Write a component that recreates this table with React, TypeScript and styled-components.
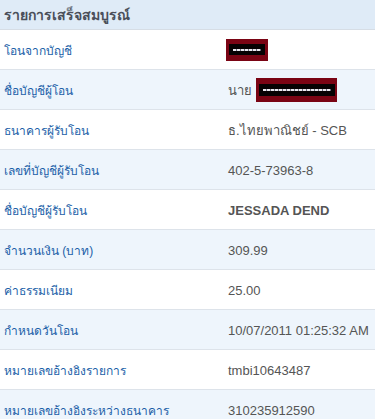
import React from "react";
import styled, { createGlobalStyle } from "styled-components";

const Global = createGlobalStyle`
  html, body { margin: 0; padding: 0; background: #ffffff; }
  body { font-family: "Liberation Sans", "Noto Sans", sans-serif; }
`;

const Panel = styled.div`
  width: 375px;
  display: flex;
  flex-direction: column;
`;

const Header = styled.div`
  height: 29px;
  background: #dfebf7;
  border-bottom: 1px solid #d6dde5;
  display: flex;
  align-items: center;
  padding-left: 4px;
  font-size: 14px;
  font-weight: bold;
  color: #4a4f5a;
`;

const Row = styled.div<{ $shaded: boolean }>`
  height: 40px;
  box-sizing: border-box;
  display: grid;
  grid-template-columns: 228px 1fr;
  align-items: center;
  background: ${(p) => (p.$shaded ? "#eef5fc" : "#ffffff")};
  border-bottom: 1px solid #dde3ea;
  padding-top: 2px;
  white-space: nowrap;
`;

const Label = styled.div`
  padding-left: 4px;
  color: #1c5fa8;
  font-size: 12px;
`;

const Value = styled.div<{ $bold?: boolean }>`
  color: #555555;
  font-size: 13px;
  font-weight: ${(p) => (p.$bold ? "bold" : "normal")};
  display: flex;
  align-items: center;
  gap: 4px;
`;

const Redact = styled.span<{ $w: number; $h: number }>`
  display: inline-flex;
  align-items: center;
  justify-content: center;
  width: ${(p) => p.$w}px;
  height: ${(p) => p.$h}px;
  background: #7a0414;
  margin-top: -2px;
`;

const RedactInner = styled.span<{ $w: number; $h: number }>`
  display: block;
  width: ${(p) => p.$w}px;
  height: ${(p) => p.$h}px;
  background: #050203;
  position: relative;
  &::after {
    content: "";
    position: absolute;
    left: 4px;
    right: 4px;
    top: 50%;
    height: 2px;
    margin-top: -1px;
    background: repeating-linear-gradient(90deg, #e8e8ee 0 3px, #6a6a7a 3px 4px);
  }
`;

type Item = { label: string; value: React.ReactNode; bold?: boolean };

const items: Item[] = [
  {
    label: "โอนจากบัญชี",
    value: (
      <Redact $w={42} $h={22} style={{ marginLeft: -2 }}>
        <RedactInner $w={36} $h={11} />
      </Redact>
    ),
  },
  {
    label: "ชื่อบัญชีผู้โอน",
    value: (
      <>
        นาย
        <Redact $w={81} $h={24}>
          <RedactInner $w={76} $h={12} />
        </Redact>
      </>
    ),
  },
  { label: "ธนาคารผู้รับโอน", value: "ธ.ไทยพาณิชย์ - SCB" },
  { label: "เลขที่บัญชีผู้รับโอน", value: "402-5-73963-8" },
  { label: "ชื่อบัญชีผู้รับโอน", value: "JESSADA DEND", bold: true },
  { label: "จำนวนเงิน (บาท)", value: "309.99" },
  { label: "ค่าธรรมเนียม", value: "25.00" },
  { label: "กำหนดวันโอน", value: "10/07/2011 01:25:32 AM" },
  { label: "หมายเลขอ้างอิงรายการ", value: "tmbi10643487" },
  { label: "หมายเลขอ้างอิงระหว่างธนาคาร", value: "310235912590" },
];

export default function App() {
  return (
    <>
      <Global />
      <Panel>
        <Header>รายการเสร็จสมบูรณ์</Header>
        {items.map((it, i) => (
          <Row key={it.label} $shaded={i % 2 === 1}>
            <Label>{it.label}</Label>
            <Value $bold={it.bold}>{it.value}</Value>
          </Row>
        ))}
      </Panel>
    </>
  );
}
